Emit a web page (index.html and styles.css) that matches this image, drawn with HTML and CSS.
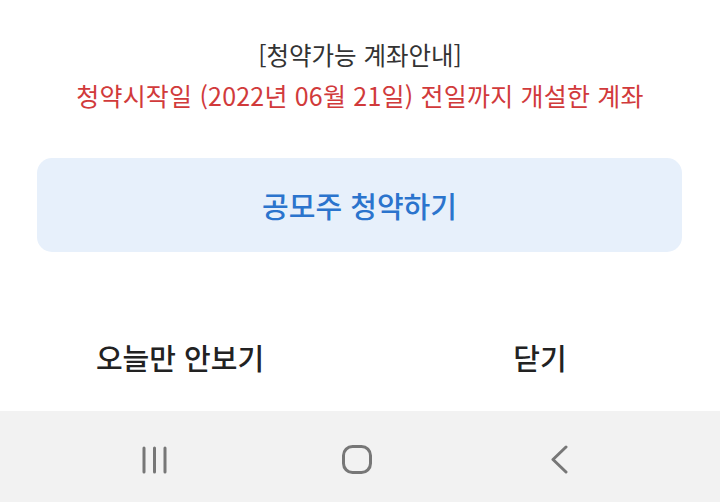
FILE: index.html
```html
<!DOCTYPE html>
<html lang="ko">
<head>
    <meta charset="UTF-8">
    <title>청약가능 계좌안내</title>
    <link rel="stylesheet" href="styles.css">
</head>
<body>

<div class="popup">
    <div class="notice">
        <p class="notice-title">[청약가능 계좌안내]</p>
        <p class="notice-desc">청약시작일 (2022년 06월 21일) 전일까지 개설한 계좌</p>
    </div>

    <a class="apply-btn" href="javascript:void(0);">공모주 청약하기</a>

    <div class="actions">
        <a href="javascript:void(0);">오늘만 안보기</a>
        <a href="javascript:void(0);">닫기</a>
    </div>
</div>

<div class="navbar">
    <span class="nav-item">
        <svg width="26" height="28" viewBox="0 0 26 28">
            <path d="M2 2v24M12.5 2v24M23 2v24" stroke="#777" stroke-width="3" stroke-linecap="round" fill="none"/>
        </svg>
    </span>
    <span class="nav-item">
        <svg width="30" height="29" viewBox="0 0 30 29">
            <rect x="1.5" y="1.5" width="27" height="26" rx="9" stroke="#777" stroke-width="3" fill="none"/>
        </svg>
    </span>
    <span class="nav-item">
        <svg width="18" height="29" viewBox="0 0 18 29">
            <path d="M16 2L3 14.5 16 27" stroke="#777" stroke-width="3" stroke-linecap="round" stroke-linejoin="round" fill="none"/>
        </svg>
    </span>
</div>

</body>
</html>
```

FILE: styles.css
```css
* {
    margin: 0;
    padding: 0;
}

html, body {
    width: 720px;
    height: 502px;
    overflow: hidden;
}

body {
    background-color: white;
    font-family: "Noto Sans CJK KR", "Noto Sans", sans-serif;
}

.popup {
    height: 411px;
    display: flex;
    flex-direction: column;
}

.notice {
    padding-top: 34px;
    text-align: center;
}

.notice-title {
    font-size: 24.5px;
    line-height: 41px;
    color: #333;
}

.notice-desc {
    font-size: 25px;
    line-height: 41px;
    color: #d13a3b;
    letter-spacing: 0.2px;
}

.apply-btn {
    display: flex;
    align-items: center;
    justify-content: center;
    height: 94px;
    margin: 42px 38px 0 37px;
    border-radius: 15px;
    background-color: #e7f0fb;
    font-size: 29px;
    font-weight: 500;
    color: #2b74cd;
    text-decoration: none;
}

.actions {
    display: flex;
    flex: 1;
}

.actions a {
    flex: 1;
    display: flex;
    align-items: center;
    justify-content: center;
    padding-top: 51px;
    font-size: 29px;
    font-weight: 500;
    color: #222;
    text-decoration: none;
}

.navbar {
    height: 91px;
    background-color: #f2f2f2;
    display: flex;
    align-items: center;
    padding-left: 125px;
    gap: 142px;
}

.nav-item {
    width: 60px;
    display: flex;
    justify-content: center;
    padding-top: 6px;
}
```
